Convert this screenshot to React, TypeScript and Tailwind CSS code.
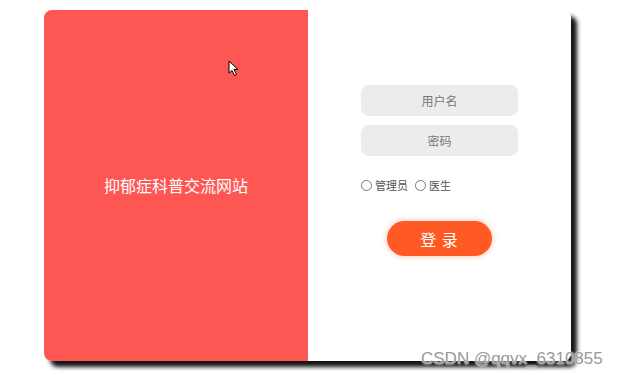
import { useState } from 'react';

export default function App() {
  const [role, setRole] = useState('');

  return (
    <div className="relative w-[622px] h-[375px] bg-white overflow-hidden font-['Microsoft_YaHei','Noto_Sans_CJK_SC',sans-serif]">
      {/* login card */}
      <div className="ml-[44px] pt-[10px]">
        <div className="flex w-[527px] h-[351px] rounded-lg shadow-[6px_6px_4px_rgba(0,0,0,0.92)]">
          <div className="w-[264px] bg-[#fe5753] rounded-l-lg flex items-center justify-center">
            <span className="text-white text-[16px] mt-[-2px]">抑郁症科普交流网站</span>
          </div>
          <div className="flex-1 bg-white rounded-r-lg flex flex-col items-center pt-[75px]">
            <div className="w-[157px]">
              <input
                placeholder="用户名"
                className="w-full h-[31px] rounded-lg bg-[#ececec] text-center text-[12px] text-[#555] placeholder:text-[#777] outline-none"
              />
              <input
                type="password"
                placeholder="密码"
                className="w-full h-[31px] mt-[9px] rounded-lg bg-[#ececec] text-center text-[12px] text-[#555] placeholder:text-[#777] outline-none"
              />
              <div className="flex items-center mt-[21px] text-[11px] text-[#555] h-[16px]">
                <label className="flex items-center gap-[3px]">
                  <span
                    onClick={() => setRole('admin')}
                    className={`w-[11px] h-[11px] rounded-full border border-[#777] ${role === 'admin' ? 'bg-[#777]' : 'bg-white'}`}
                  />
                  管理员
                </label>
                <label className="flex items-center gap-[3px] ml-[7px]">
                  <span
                    onClick={() => setRole('doctor')}
                    className={`w-[11px] h-[11px] rounded-full border border-[#777] ${role === 'doctor' ? 'bg-[#777]' : 'bg-white'}`}
                  />
                  医生
                </label>
              </div>
            </div>
            <button className="mt-[28px] w-[105px] h-[35px] rounded-full bg-[#ff5a24] text-white text-[16px] tracking-[1px] shadow-[0_0_6px_rgba(255,110,60,0.45)]">
              登 录
            </button>
          </div>
        </div>
      </div>

      {/* mouse cursor */}
      <svg className="absolute left-[228px] top-[60px]" width="12" height="17" viewBox="0 0 12 17">
        <path d="M1 1 L1 13 L4 10.5 L6.5 15.5 L8.5 14.5 L6 9.5 L10 9.5 Z" fill="#fff" stroke="#000" strokeWidth="1" strokeLinejoin="round" />
      </svg>

      {/* watermark */}
      <div className="absolute left-[421px] top-[346px] text-[17px] text-[#9a9a9a] font-['Liberation_Sans',sans-serif] [text-shadow:0_0_2px_#fff,0_0_2px_#fff]">
        CSDN @qqvx_6310855
      </div>
    </div>
  );
}
